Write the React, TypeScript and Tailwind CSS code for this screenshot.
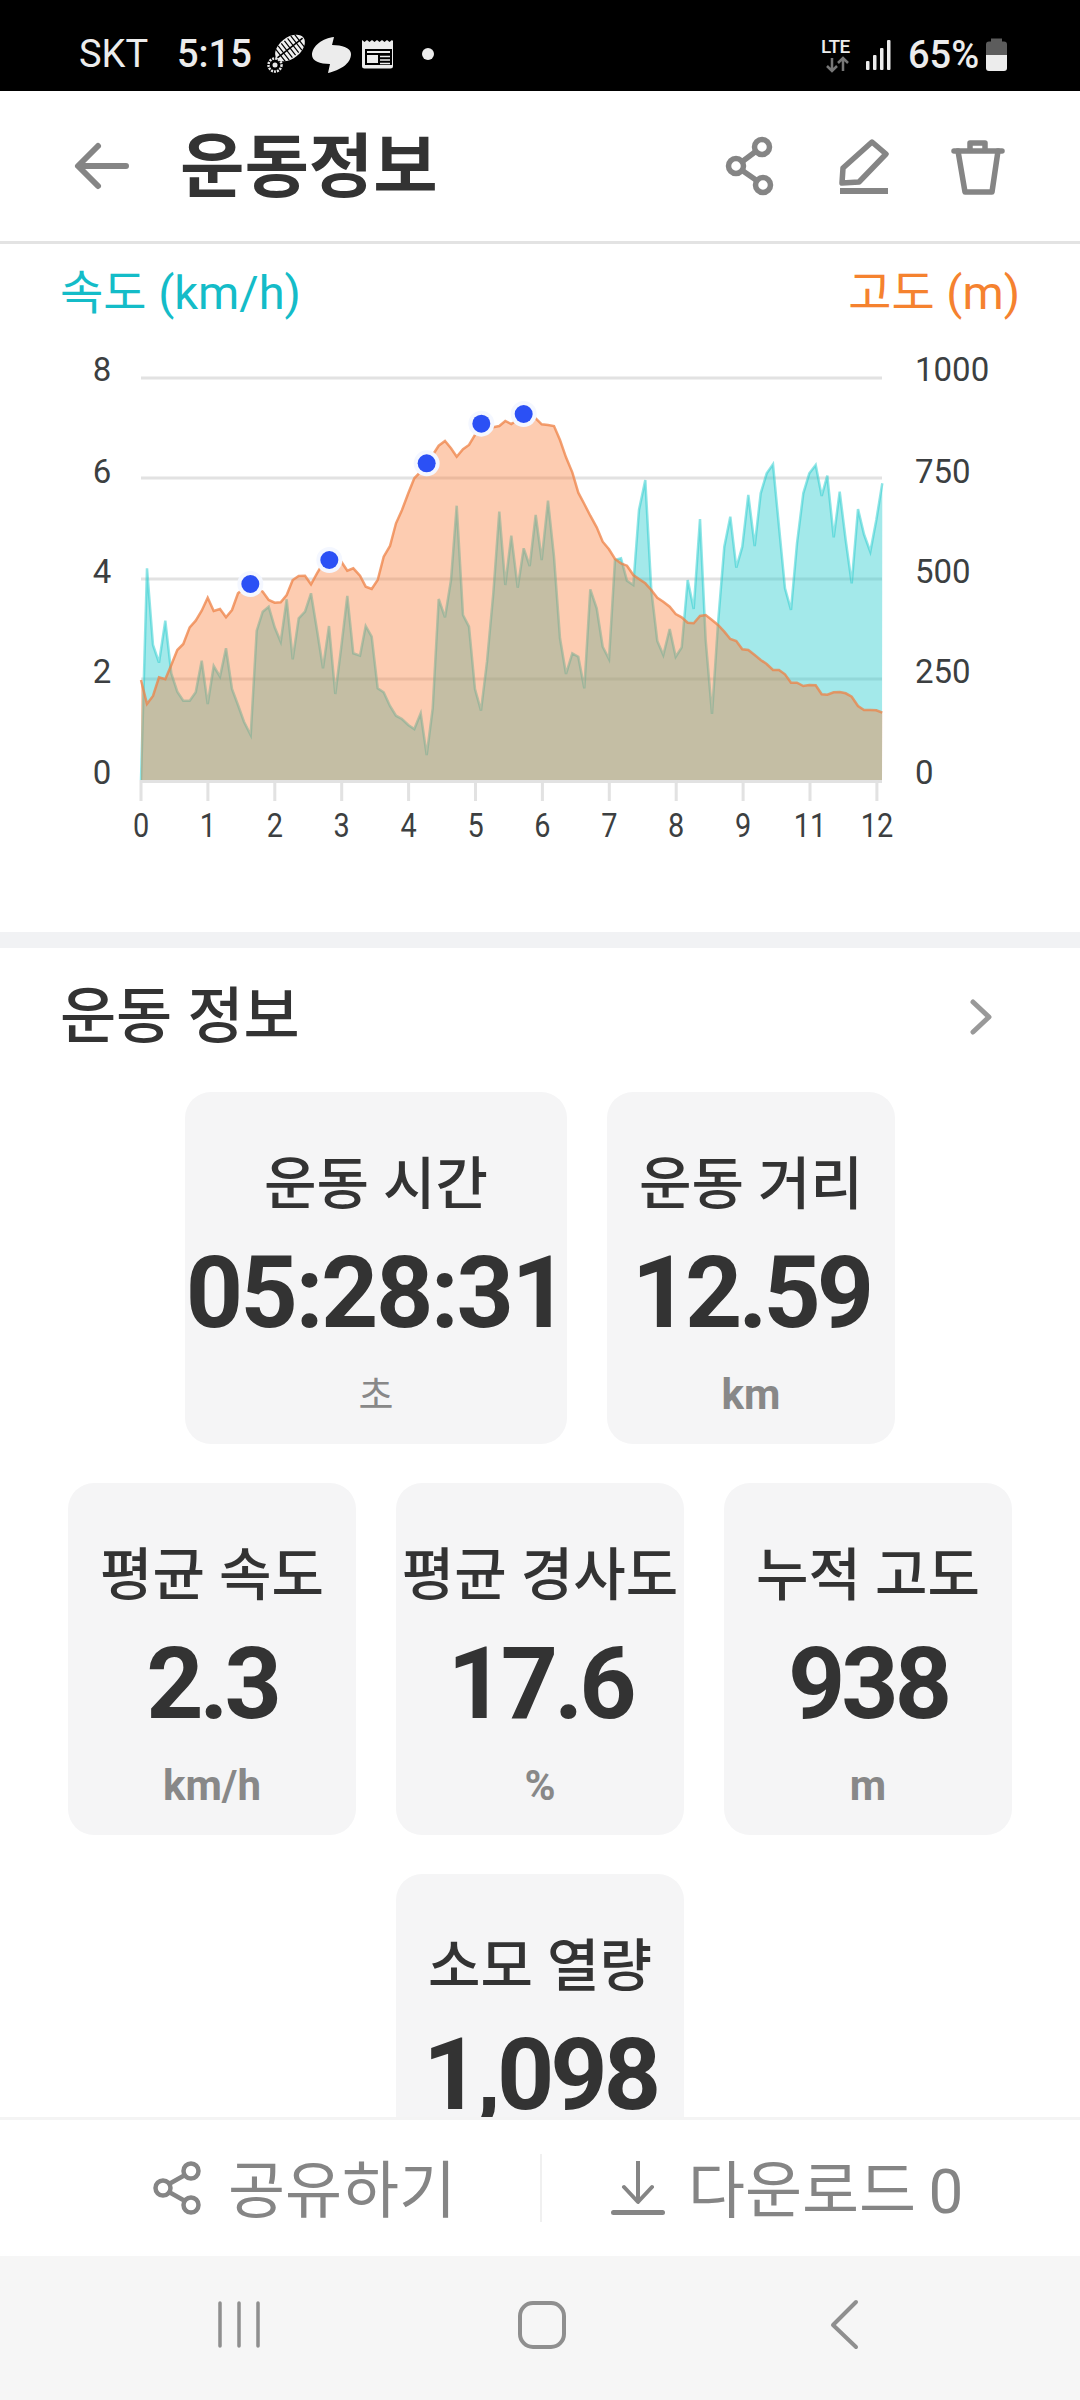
import React from "react";

const tealL: number[][] = [[243,1320],[261,685],[279,915],[297,968],[316,842],[334,1000],[352,1055],[370,1082],[389,1082],[407,1057],[425,962],[443,1092],[461,978],[480,1010],[498,925],[516,1047],[534,1095],[552,1145],[572,1185],[590,872],[608,815],[626,800],[644,862],[662,905],[680,778],[698,958],[716,835],[735,815],[753,760],[771,870],[789,985],[807,858],[826,1062],[844,920],[862,768],[880,940],[900,947],[917,858],[935,890],[953,1045],[971,1057],[990,1098],[1008,1127],[1026,1137],[1045,1155],[1063,1167],[1082,1120],[1100,1245],[1118,1105],[1136,777],[1155,832],[1173,720],[1190,497],[1209,825],[1227,860],[1245,1047],[1263,1112],[1281,965],[1300,760],[1318,515],[1336,735],[1354,587],[1373,743],[1391,625],[1409,678],[1427,525],[1445,660],[1464,482]];
const tealR: number[][] = [[42,650],[60,895],[78,1002],[97,940],[115,950],[133,1045],[151,748],[170,805],[188,920],[207,957],[225,660],[243,655],[261,722],[280,735],[297,510],[316,420],[334,750],[352,903],[370,945],[389,867],[407,950],[425,922],[443,720],[461,807],[480,537],[497,900],[516,1122],[534,850],[553,620],[571,530],[589,683],[607,620],[625,465],[644,618],[662,460],[680,400],[699,373],[717,560],[735,745],[753,810],[771,610],[790,460],[808,400],[827,375],[845,468],[862,407],[881,592],[899,455],[917,600],[935,730],[954,507],[972,583],[991,635],[1009,540],[1027,430]];
const orangeL: number[][] = [[243,1020],[261,1092],[279,1068],[297,1012],[316,1018],[334,975],[352,930],[370,912],[389,862],[407,842],[425,812],[443,773],[461,813],[480,807],[498,832],[516,810],[534,760],[552,745],[572,735],[590,745],[608,755],[626,780],[644,788],[662,787],[680,765],[698,720],[716,708],[735,707],[753,733],[771,700],[789,670],[807,660],[826,660],[844,665],[862,692],[880,685],[900,707],[917,740],[935,747],[953,720],[971,650],[990,618],[1008,550],[1026,510],[1045,460],[1063,415],[1082,395],[1100,370],[1118,345],[1136,317],[1155,303],[1173,325],[1190,350],[1209,328],[1227,315],[1245,285],[1263,250],[1281,255],[1300,262],[1318,258],[1336,243],[1354,252],[1373,240],[1391,225],[1409,230],[1427,235],[1445,253],[1464,255],[1482,258]];
const orangeR: number[][] = [[60,300],[78,352],[97,397],[115,458],[133,492],[151,527],[170,562],[188,605],[207,628],[225,657],[243,670],[261,677],[280,705],[297,717],[316,730],[334,750],[352,773],[370,785],[389,800],[407,822],[425,832],[443,848],[461,850],[480,828],[497,825],[516,840],[534,855],[553,875],[571,897],[589,903],[607,928],[625,930],[644,945],[662,960],[680,972],[699,990],[717,990],[735,1003],[753,1028],[771,1028],[790,1038],[808,1035],[827,1036],[845,1063],[862,1064],[881,1057],[899,1056],[917,1060],[935,1070],[954,1098],[972,1110],[991,1110],[1009,1111],[1027,1118]];

const toL = ([x, y]: number[]) => `${(x / 3 + 60).toFixed(1)},${(y / 3 + 340).toFixed(1)}`;
const toR = ([x, y]: number[]) => `${(x / 3 + 540).toFixed(1)},${(y / 3 + 340).toFixed(1)}`;
const teal = [...tealL.map(toL), ...tealR.map(toR)].join(" ");
const orange = [...orangeL.map(toL), ...orangeR.map(toR)].join(" ");

const dots = [[571, 732], [808, 660], [1100, 370], [1264, 251], [1391, 222]];
const gridY = [378, 478, 579, 679];
const leftLabels: [string, number][] = [["8", 369.5], ["6", 471], ["4", 571], ["2", 671], ["0", 772]];
const rightLabels: [string, number][] = [["1000", 369.5], ["750", 471], ["500", 571], ["250", 671], ["0", 772]];
const xLabels = ["0", "1", "2", "3", "4", "5", "6", "7", "8", "9", "11", "12"];

function Chart() {
  return (
    <svg viewBox="0 340 1080 592" width={1080} height={592} className="block">
      {gridY.map((y) => (
        <rect key={y} x={141} y={y - 1.5} width={741} height={3} fill="#e2e2e2" />
      ))}
      <rect x={141} y={780} width={741} height={3} fill="#e2e2e2" />
      {xLabels.map((_, i) => (
        <rect key={i} x={139.5 + i * 66.9} y={780} width={3} height={21} fill="#e2e2e2" />
      ))}
      <polygon points={`141,780 ${teal} 882,780`} fill="#24cbcd" fillOpacity={0.42} />
      <polyline points={teal} fill="none" stroke="#24cbcd" strokeOpacity={0.5} strokeWidth={2.5} />
      <polygon points={`141,780 ${orange} 882,780`} fill="#fa7832" fillOpacity={0.38} />
      <polyline points={orange} fill="none" stroke="#ee8146" strokeOpacity={0.75} strokeWidth={2.5} />
      {dots.map(([x, y]) => (
        <g key={x}>
          <circle cx={x / 3 + 60} cy={y / 3 + 340} r={13} fill="#f4f7ff" />
          <circle cx={x / 3 + 60} cy={y / 3 + 340} r={9} fill="#2b50f5" />
        </g>
      ))}
      <g fill="#3c3f41" fontSize={33} fontFamily="Roboto, sans-serif">
        {leftLabels.map(([t, y]) => (
          <text key={t} x={102} y={y + 11.5} textAnchor="middle">{t}</text>
        ))}
        {rightLabels.map(([t, y]) => (
          <text key={t} x={915} y={y + 11.5}>{t}</text>
        ))}
        {xLabels.map((t, i) => (
          <text
            key={t}
            transform={`translate(${141 + i * 66.9} 836.5) scale(0.85 1)`}
            fontSize={34}
            textAnchor="middle"
          >
            {t}
          </text>
        ))}
      </g>
    </svg>
  );
}

function StatusBar() {
  return (
    <div className="relative h-[91px] shrink-0 bg-black text-[#ececec] flex items-center pt-[17px]">
      <span className="ml-[79px] text-[38px] leading-none w-[98px]">SKT</span>
      <span className="text-[38px] font-medium leading-none">5:15</span>
      <svg viewBox="250 25 200 60" width={200} height={60} className="absolute left-[250px] top-[25px]">
        <g transform="rotate(-38 290 48)">
          <ellipse cx={290} cy={48} rx={17} ry={10.5} fill="#efefef" />
          <path d="M278 40v16M282 39v18M286 39v18M290 39v18M294 39v18M298 39v18M302 40v16" stroke="#000" strokeWidth={1.2} />
          <path d="M274 48h32" stroke="#000" strokeWidth={1.5} />
        </g>
        <circle cx={275} cy={65} r={6.5} fill="none" stroke="#e8e8e8" strokeWidth={2.5} strokeDasharray="2 1" />
        <circle cx={275} cy={65} r={2.5} fill="#e8e8e8" />
        <path d="M334 37L332 45C342 45 351 48 351 54C351 64 340 70 328 73L330 64C320 64 312 61 312 55C312 46 323 38 334 37Z" fill="#ececec" />
        <path d="M362 40l2.5 2 2.5-2 2.5 2 2.5-2 2.5 2 2.5-2 2.5 2 2.5-2 2.5 2 2.5-2 2.5 2 2.5-2 1 1V66a2.5 2.5 0 0 1-2.5 2.5H364.5a2.5 2.5 0 0 1-2.5-2.5Z" fill="#ececec" />
        <rect x={365} y={49} width={27} height={16} fill="#000" />
        <rect x={367} y={55} width={11} height={8} fill="#ececec" />
        <path d="M380 56.5h10M380 60h10M380 63.5h10" stroke="#ececec" strokeWidth={1.5} />
        <rect x={367} y={51} width={23} height={2} fill="#ececec" />
        <circle cx={428} cy={54} r={6} fill="#ececec" />
      </svg>
      <div className="absolute left-[821px] top-[37px] text-[19px] font-medium leading-[19px] tracking-[-0.5px]">LTE</div>
      <svg viewBox="810 25 210 60" width={210} height={60} className="absolute left-[810px] top-[25px]">
        <path d="M832 58v13M827 66l5 5 5-5" fill="none" stroke="#777" strokeWidth={2.5} />
        <path d="M843 71V58M838 63l5-5 5 5" fill="none" stroke="#777" strokeWidth={2.5} />
        <rect x={866} y={61} width={3.5} height={9} rx={1} fill="#ececec" />
        <rect x={873} y={55} width={3.5} height={15} rx={1} fill="#ececec" />
        <rect x={880} y={48} width={3.5} height={22} rx={1} fill="#ececec" />
        <rect x={887} y={40} width={3.5} height={30} rx={1} fill="#ececec" />
        <path d="M991 38.5h11v3h2a3 3 0 0 1 3 3V55h-21V44.5a3 3 0 0 1 3-3h2Z" fill="#5c5c5c" />
        <path d="M986 55h21v13a3 3 0 0 1-3 3h-15a3 3 0 0 1-3-3Z" fill="#ececec" />
      </svg>
      <span className="absolute left-[908px] top-[36px] text-[38px] font-medium leading-[38px]">65%</span>
    </div>
  );
}

function Header() {
  return (
    <div className="relative h-[153px] shrink-0 border-b-[3px] border-[#e3e3e3] flex items-center bg-white">
      <svg viewBox="0 0 60 50" width={60} height={50} className="ml-[71px] shrink-0">
        <path d="M8 25H55M27 5L7 25L27 45" fill="none" stroke="#858585" strokeWidth={6} strokeLinecap="round" strokeLinejoin="round" />
      </svg>
      <h1 className="ml-[49px] mt-[3px] text-[70px] leading-none font-bold text-[#333333]">운동정보</h1>
      <svg viewBox="700 120 320 90" width={320} height={90} className="absolute left-[700px] top-[29px]">
        <g fill="none" stroke="#858585" strokeWidth={5.5} strokeLinejoin="round" strokeLinecap="round">
          <circle cx={762} cy={147} r={7.5} />
          <circle cx={736} cy={166} r={7.5} />
          <circle cx={763} cy={185} r={7.5} />
          <path d="M755 152L743 161M743 171L756 180" />
          <path d="M872 142L886 154L859 182L842 183L843 168Z" />
          <path d="M954 151H1002" />
          <path d="M958 151L965 192H992L998 151" />
          <path d="M970 150V143H985V150" />
        </g>
        <rect x={840} y={188} width={48} height={6} fill="#858585" />
      </svg>
    </div>
  );
}

type CardProps = { title: string; value: string; unit: string; plain?: boolean };

function Card({ title, value, unit, plain = false }: CardProps) {
  return (
    <div className={`${plain ? "w-[382px]" : "w-[288px]"} h-[352px] rounded-[26px] bg-[#f5f5f6] flex flex-col items-center pt-[60px]`}>
      <div className="text-[57px] leading-[66px] font-medium text-[#333333] whitespace-nowrap">{title}</div>
      <div className={`mt-[20px] text-[100px] leading-[110px] font-bold text-[#333333] whitespace-nowrap ${plain ? "tracking-[-2.5px]" : "tracking-[-4px]"}`}>{value}</div>
      <div className={`mt-[17px] leading-[60px] text-[#888888] ${plain ? "text-[38px] font-normal" : "text-[42px] font-bold"}`}>{unit}</div>
    </div>
  );
}

function Footer() {
  return (
    <>
      <div className="h-[139px] shrink-0 bg-white border-t-[3px] border-[#f4f4f4] flex items-center text-[#858585]">
        <div className="w-[540px] pl-[153px] flex items-center">
          <svg viewBox="0 0 48 54" width={48} height={54} className="shrink-0">
            <g fill="none" stroke="#858585" strokeWidth={4.5}>
              <circle cx={38} cy={10} r={7.5} />
              <circle cx={10} cy={27} r={7.5} />
              <circle cx={38} cy={44} r={7.5} />
              <path d="M32 14L16 23M16 31L32 40" />
            </g>
          </svg>
          <span className="ml-[27px] mt-[7px] text-[62px] leading-none">공유하기</span>
        </div>
        <div className="w-[2px] h-[68px] bg-[#f0f0f0]" />
        <div className="pl-[69px] flex items-center">
          <svg viewBox="0 0 54 54" width={54} height={54} className="shrink-0">
            <path d="M27 0V40M13 26L27 41L41 26" fill="none" stroke="#858585" strokeWidth={4} strokeLinecap="round" strokeLinejoin="round" />
            <rect x={0} y={49} width={54} height={5} rx={2.5} fill="#858585" />
          </svg>
          <span className="ml-[23px] mt-[7px] text-[62px] leading-none [word-spacing:-3px]">다운로드 0</span>
        </div>
      </div>
      <div className="h-[144px] shrink-0 bg-[#f6f6f6] flex">
        <svg viewBox="0 2256 1080 144" width={1080} height={144} className="block">
          <g fill="none" stroke="#8f8f8f" strokeWidth={3.5} strokeLinecap="round" strokeLinejoin="round">
            <path d="M220 2303V2346M239 2303V2346M258 2303V2346" />
            <rect x={520} y={2303} width={44} height={44} rx={13} strokeWidth={4} />
            <path d="M856 2302L833 2325L856 2347" strokeWidth={4} />
          </g>
        </svg>
      </div>
    </>
  );
}

export default function App() {
  return (
    <div className="w-[1080px] h-[2400px] flex flex-col overflow-hidden bg-white font-[Roboto,'Noto_Sans_CJK_KR',sans-serif]">
      <StatusBar />
      <Header />
      <main className="flex-1 min-h-0 overflow-hidden">
        <div className="h-[96px] px-[60px] flex justify-between items-center text-[47px] leading-none">
          <span className="text-[#14bcc8]">속도 (km/h)</span>
          <span className="text-[#f5822f]">고도 (m)</span>
        </div>
        <Chart />
        <div className="h-[16px] bg-[#f1f2f4]" />
        <div className="h-[144px] pl-[60px] pr-[87px] flex items-center justify-between">
          <h2 className="text-[61px] leading-none font-medium text-[#333333] mb-[6px]">운동 정보</h2>
          <svg viewBox="0 0 24 36" width={24} height={36} className="mb-[6px]">
            <path d="M4 3L20 18L4 33" fill="none" stroke="#999999" strokeWidth={5} strokeLinecap="round" strokeLinejoin="round" />
          </svg>
        </div>
        <div className="flex flex-wrap justify-center gap-x-[40px] gap-y-[39px] w-[960px] mx-auto">
          <Card title="운동 시간" value="05:28:31" unit="초" plain />
          <Card title="운동 거리" value="12.59" unit="km" />
          <Card title="평균 속도" value="2.3" unit="km/h" />
          <Card title="평균 경사도" value="17.6" unit="%" />
          <Card title="누적 고도" value="938" unit="m" />
          <Card title="소모 열량" value="1,098" unit="kcal" />
        </div>
      </main>
      <Footer />
    </div>
  );
}
